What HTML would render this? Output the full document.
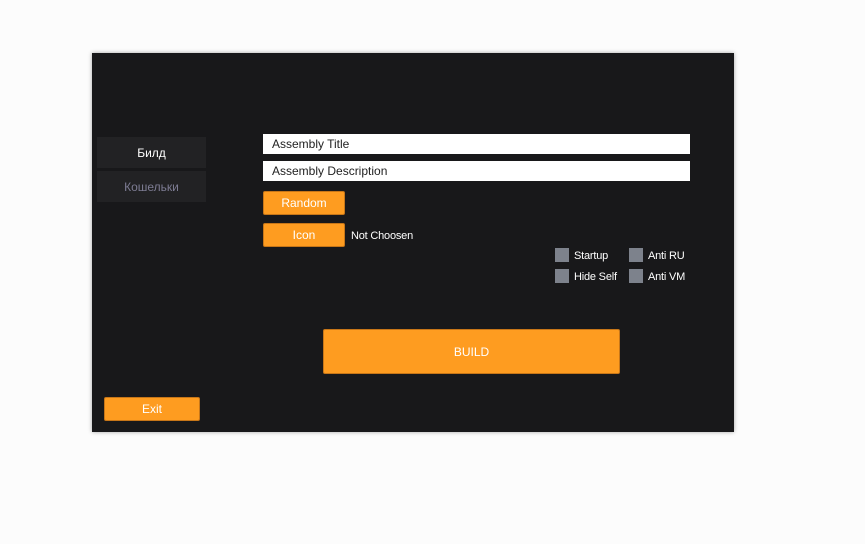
<!DOCTYPE html>
<html><head><style>
body{margin:0;width:865px;height:544px;background:#fcfcfc;position:relative;font-family:"Liberation Sans","Noto Sans CJK SC",sans-serif;overflow:hidden}
.w{position:absolute;left:92px;top:53px;width:642px;height:379px;background:#18181a;box-shadow:0 0 4px rgba(0,0,0,.35)}
.a{position:absolute}
.sb{background:#222224;font-size:12px;text-align:center;line-height:32px}
.in{background:#fff;color:#222;font-size:12px;line-height:20px;padding-left:9px;box-sizing:border-box}
.bt{background:#fe9c20;border:1px solid #c77618;border-radius:2px;box-sizing:border-box;color:#fff;font-size:12px;text-align:center}
.cb{width:14px;height:14px;background:#7d828c}
.t{color:#fff;font-size:11px;letter-spacing:-0.2px}
</style></head><body>
<div class="w"></div>
<div class="a sb" style="left:97px;top:137px;width:109px;height:31px;color:#fff">Билд</div>
<div class="a sb" style="left:97px;top:171px;width:109px;height:31px;color:#7d7c93">Кошельки</div>
<div class="a in" style="left:263px;top:134px;width:427px;height:20px">Assembly Title</div>
<div class="a in" style="left:263px;top:161px;width:427px;height:20px">Assembly Description</div>
<div class="a bt" style="left:263px;top:191px;width:82px;height:24px;line-height:22px">Random</div>
<div class="a bt" style="left:263px;top:223px;width:82px;height:24px;line-height:22px">Icon</div>
<div class="a t" style="left:351px;top:230px">Not Choosen</div>
<div class="a cb" style="left:555px;top:248px"></div><div class="a t" style="left:574px;top:250px">Startup</div>
<div class="a cb" style="left:555px;top:269px"></div><div class="a t" style="left:574px;top:271px">Hide Self</div>
<div class="a cb" style="left:629px;top:248px"></div><div class="a t" style="left:648px;top:250px">Anti RU</div>
<div class="a cb" style="left:629px;top:269px"></div><div class="a t" style="left:648px;top:271px">Anti VM</div>
<div class="a bt" style="left:323px;top:329px;width:297px;height:45px;line-height:45px">BUILD</div>
<div class="a bt" style="left:104px;top:397px;width:96px;height:24px;line-height:23px">Exit</div>
</body></html>
